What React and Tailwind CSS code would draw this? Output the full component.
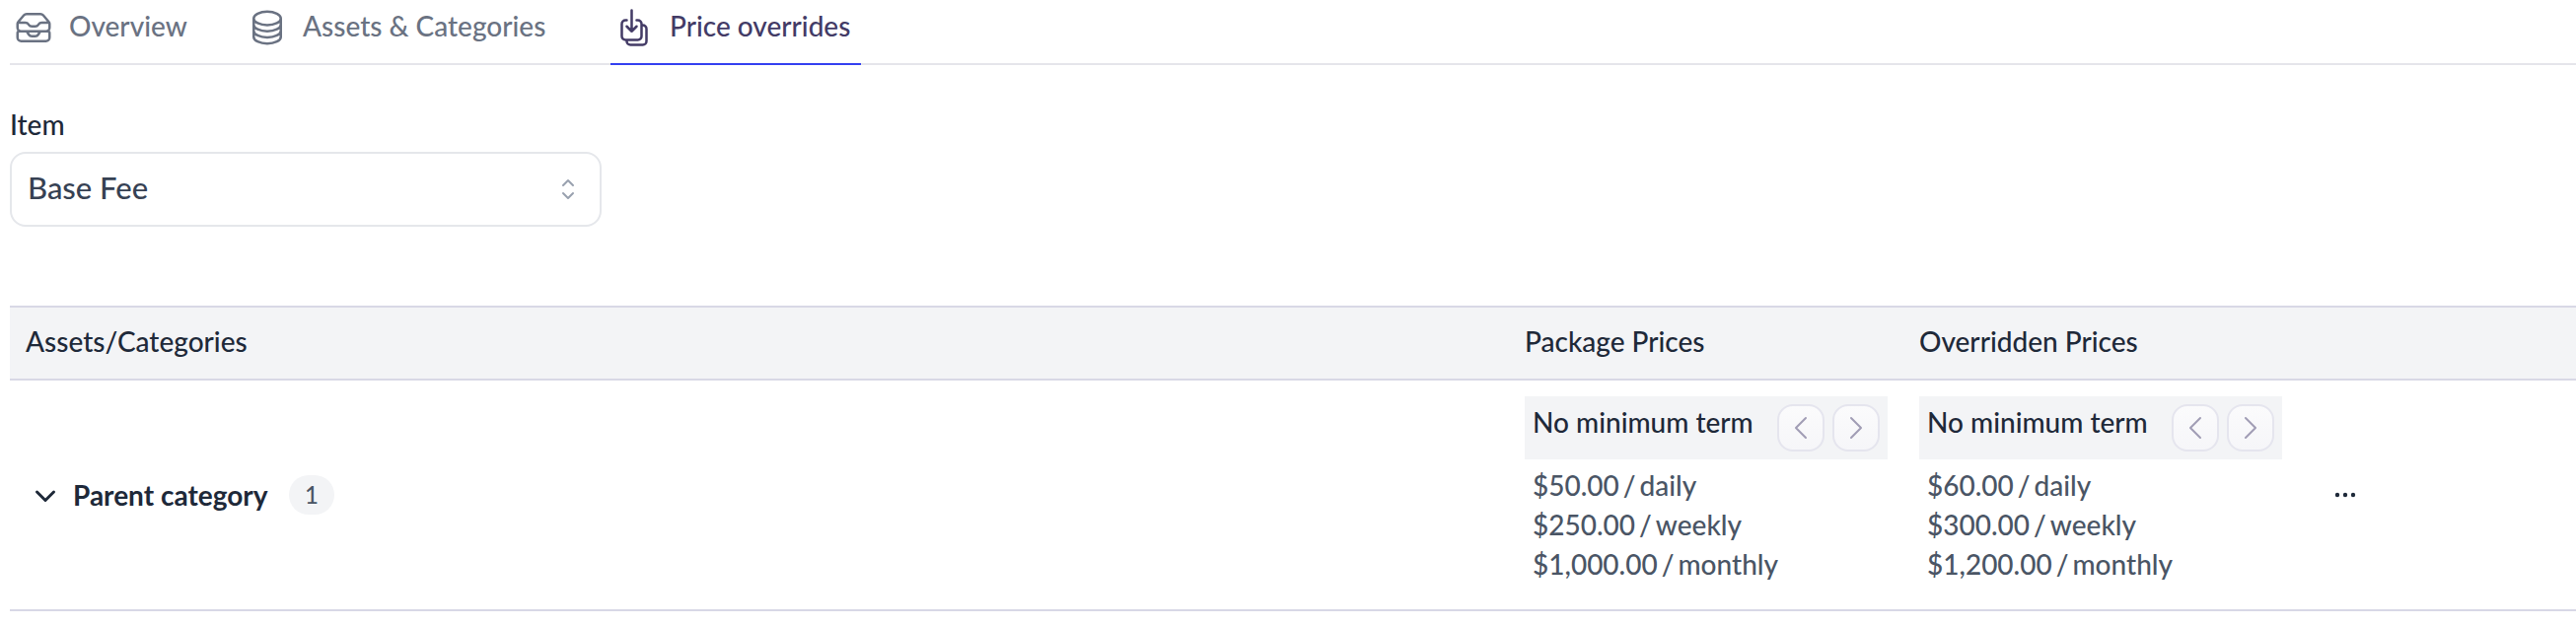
import { useState } from 'react'
import {
  HiOutlineInboxStack,
  HiOutlineCircleStack,
  HiOutlineArrowDownOnSquareStack,
  HiOutlineChevronLeft,
  HiOutlineChevronRight,
} from 'react-icons/hi2'

const tabs = [
  { label: 'Overview', icon: HiOutlineInboxStack, width: 'w-[189px]' },
  { label: 'Assets & Categories', icon: HiOutlineCircleStack, width: 'w-[324px]' },
  { label: 'Price overrides', icon: HiOutlineArrowDownOnSquareStack, width: 'w-[254px]' },
]

const packagePrices = [
  { amount: '$50.00', period: 'daily' },
  { amount: '$250.00', period: 'weekly' },
  { amount: '$1,000.00', period: 'monthly' },
]

const overriddenPrices = [
  { amount: '$60.00', period: 'daily' },
  { amount: '$300.00', period: 'weekly' },
  { amount: '$1,200.00', period: 'monthly' },
]

function Tabs() {
  const [active, setActive] = useState('Price overrides')

  return (
    <nav className="flex h-[66px] gap-12 border-b-2 border-[#e5e5eb]">
      {tabs.map(({ label, icon: Icon, width }) => (
        <a
          key={label}
          href="#"
          onClick={() => setActive(label)}
          className={`flex h-[66px] shrink-0 gap-4 border-b-2 pt-2 pl-1 leading-9 whitespace-nowrap ${width} ${
            active === label
              ? 'border-[#3340f0] text-[#433b66]'
              : 'border-transparent text-gray-500'
          }`}
        >
          <Icon className="size-10 shrink-0" />
          <span>{label}</span>
        </a>
      ))}
    </nav>
  )
}

function ItemSelect() {
  return (
    <div className="mt-10 w-[600px]">
      <label htmlFor="item" className="block text-gray-800">
        Item
      </label>
      <div className="relative mt-2">
        <select
          id="item"
          className="block h-[76px] w-full appearance-none rounded-2xl border-2 border-gray-200 bg-white pr-16 pb-1 pl-4 text-[31px] text-gray-700"
        >
          <option>Base Fee</option>
        </select>
        <svg
          viewBox="0 0 20 24"
          className="pointer-events-none absolute top-[26px] right-6 h-6 w-5 text-gray-400"
          fill="none"
          stroke="currentColor"
          strokeWidth="2"
          strokeLinecap="round"
          strokeLinejoin="round"
        >
          <path d="m5 8 5-5 5 5M5 16l5 5 5-5" />
        </svg>
      </div>
    </div>
  )
}

function TermButton({ label, icon: Icon }) {
  return (
    <button
      type="button"
      aria-label={label}
      className="flex size-12 items-center justify-center rounded-2xl border-2 border-[#e5e5ee] bg-linear-to-b from-[#fbfbfc] to-[#f6f6f9] text-[#a19db5]"
    >
      <Icon className="size-8" />
    </button>
  )
}

function PriceCell({ prices }) {
  return (
    <td className="p-4 align-top">
      <div className="flex h-16 gap-2 bg-gray-100 p-2">
        <span className="grow leading-9 whitespace-nowrap text-gray-800">No minimum term</span>
        <TermButton label="Previous term" icon={HiOutlineChevronLeft} />
        <TermButton label="Next term" icon={HiOutlineChevronRight} />
      </div>
      <ul className="px-2 pt-1.5 pb-2.5 text-gray-600">
        {prices.map(({ amount, period }) => (
          <li key={period} className="flex gap-1">
            <span>{amount}</span>
            <span>/</span>
            <span>{period}</span>
          </li>
        ))}
      </ul>
    </td>
  )
}

function PricesTable() {
  return (
    <table className="mt-20 w-full table-fixed text-left text-gray-800">
      <thead>
        <tr className="h-[74px] border-y-2 border-[#d8d8e6] bg-gray-100">
          <th className="px-4 pb-1 font-medium">Assets/Categories</th>
          <th className="w-[400px] px-4 pb-1 font-medium">Package Prices</th>
          <th className="w-[400px] px-4 pb-1 font-medium">Overridden Prices</th>
          <th className="w-[282px]" aria-label="Actions" />
        </tr>
      </thead>
      <tbody>
        <tr className="border-b-2 border-[#d8d8e6]">
          <td className="px-4">
            <div className="flex items-center">
              <button type="button" aria-label="Toggle category" className="px-2">
                <svg
                  viewBox="0 0 24 24"
                  className="size-6"
                  fill="none"
                  stroke="currentColor"
                  strokeWidth="3"
                  strokeLinecap="round"
                  strokeLinejoin="round"
                >
                  <path d="m3.5 9 8.5 8.5L20.5 9" />
                </svg>
              </button>
              <span className="ml-2 w-[203px] font-bold">Parent category</span>
              <span className="ml-4 rounded-full bg-gray-100 px-4 text-2xl leading-10 text-gray-600">
                1
              </span>
            </div>
          </td>
          <PriceCell prices={packagePrices} />
          <PriceCell prices={overriddenPrices} />
          <td className="px-9">
            <button type="button" aria-label="More actions" className="block">
              <svg viewBox="0 0 24 24" className="size-6" fill="currentColor">
                <circle cx="4" cy="12" r="2.2" />
                <circle cx="12" cy="12" r="2.2" />
                <circle cx="20" cy="12" r="2.2" />
              </svg>
            </button>
          </td>
        </tr>
      </tbody>
    </table>
  )
}

export default function App() {
  return (
    <main className="min-h-screen bg-white pl-2.5 font-['Lato',sans-serif] text-[28px] leading-10 font-medium">
      <Tabs />
      <ItemSelect />
      <PricesTable />
    </main>
  )
}
